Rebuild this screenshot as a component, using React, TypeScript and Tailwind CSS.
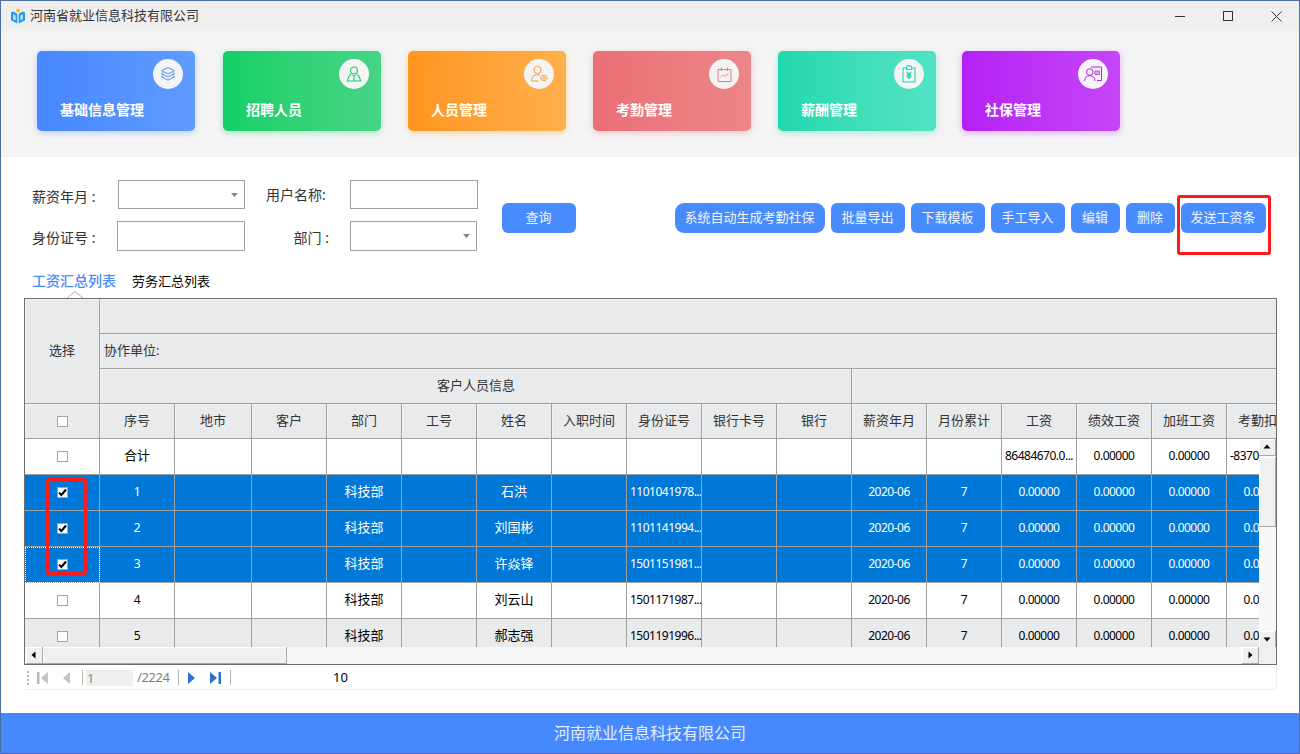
import type { ReactNode } from 'react';

const cards = [
  { title: '基础信息管理', bg: 'bg-gradient-to-r from-[#4787ff] to-[#5f9cff] shadow-[0_2px_6px_rgba(71,135,255,0.35)]', gap: '', icon: 'layers' },
  { title: '招聘人员', bg: 'bg-gradient-to-r from-[#10d066] to-[#46d386] shadow-[0_2px_6px_rgba(16,208,102,0.35)]', gap: 'ml-[28px]', icon: 'person' },
  { title: '人员管理', bg: 'bg-gradient-to-r from-[#ff951c] to-[#ffb04b] shadow-[0_2px_6px_rgba(255,149,28,0.35)]', gap: 'ml-[27px]', icon: 'manage' },
  { title: '考勤管理', bg: 'bg-gradient-to-r from-[#eb6f75] to-[#ec8689] shadow-[0_2px_6px_rgba(235,111,117,0.35)]', gap: 'ml-[27px]', icon: 'calendar' },
  { title: '薪酬管理', bg: 'bg-gradient-to-r from-[#1fd8ae] to-[#52e3c4] shadow-[0_2px_6px_rgba(31,216,174,0.35)]', gap: 'ml-[27px]', icon: 'pay' },
  { title: '社保管理', bg: 'bg-gradient-to-r from-[#b41ff5] to-[#c545f8] shadow-[0_2px_6px_rgba(180,31,245,0.35)]', gap: 'ml-[26px]', icon: 'card' },
];

const CardIcon = ({ name }: { name: string }) => {
  if (name === 'layers') {
    return (
      <svg width="16" height="16" viewBox="0 0 16 16" fill="none" stroke="#4f8cff" strokeWidth="1">
        <path d="M8 1.5 14.5 4.7 8 8 1.5 4.7Z" />
        <path d="M3.2 6.6 1.5 7.6 8 11 14.5 7.6 12.8 6.6" />
        <path d="M3.2 9.6 1.5 10.7 8 14.2 14.5 10.7 12.8 9.6" />
      </svg>
    );
  }
  if (name === 'person') {
    return (
      <svg width="16" height="16" viewBox="0 0 16 16" fill="none" stroke="#14cf69" strokeWidth="1.1">
        <circle cx="8" cy="4.4" r="3.4" />
        <path d="M5.4 8.2C3.2 9.2 2 11.6 1.6 14.6M10.6 8.2c2.2 1 3.4 3.4 3.8 6.4M.6 15h14.8M8 9.6v5M6.6 9.2l1.4 1 1.4-1" />
      </svg>
    );
  }
  if (name === 'manage') {
    return (
      <svg width="18" height="18" viewBox="0 0 18 18" fill="none" stroke="#fb9a2c" strokeWidth="1">
        <circle cx="7.5" cy="5" r="3.6" />
        <path d="M1.5 16c0-4 2.4-6.2 6-6.2 1 0 1.8.2 2.6.5M1.5 16h7" />
        <path d="M10.5 13 12.3 10.6h3.4L17.3 13l-1.6 2.4h-3.4Z" />
        <circle cx="14" cy="13" r="1" />
      </svg>
    );
  }
  if (name === 'calendar') {
    return (
      <svg width="15" height="15" viewBox="0 0 15 15" fill="none" stroke="#e9777c" strokeWidth="1">
        <path d="M1 2.5h13v12H1ZM4.5.5v3.5M10.5.5v3.5" />
        <path d="M3.5 10 5.8 7.8 7.6 9.4 11.5 6.4" strokeWidth="0.9" />
      </svg>
    );
  }
  if (name === 'pay') {
    return (
      <svg width="14" height="18" viewBox="0 0 14 18" fill="none" stroke="#22d8b0" strokeWidth="1.1">
        <path d="M4 3H1v14h12V3h-3" />
        <path d="M4.4 4.5V2.6C4.4 1.5 5.5.6 7 .6s2.6.9 2.6 2v1.9Z" />
        <path d="M4.8 6.8 7 9.4l2.2-2.6M4.6 10h4.8M4.6 12h4.8M7 9.4V14" strokeWidth="1.3" />
      </svg>
    );
  }
  return (
    <svg width="18" height="16" viewBox="0 0 18 16" fill="none" stroke="#b525f6" strokeWidth="1">
      <path d="M7 1h10.5v13.5H13" />
      <circle cx="5.8" cy="6" r="3.3" />
      <path d="M.6 15c0-3.4 2-5.4 5.2-5.4S11 11.6 11 15" />
      <path d="M11 5h4.5v3.5H11Z" fill="#b525f6" fillOpacity="0.4" strokeWidth="0.7" />
    </svg>
  );
};

const Logo = () => (
  <svg width="16" height="16" viewBox="0 0 16 16">
    <circle cx="8" cy="2.6" r="2.1" fill="#fdc52c" />
    <path d="M1 4.5 3.4 3.4 7.3 6v9.4L1 12.2Z" fill="#1d9bf0" />
    <path d="M15 4.5 12.6 3.4 8.7 6v9.4l6.3-3.2Z" fill="#1d9bf0" />
    <path d="M3.2 6 5.6 7.4v5.2L3.2 11.2ZM12.8 6 10.4 7.4v5.2l2.4-1.4Z" fill="#bfe6ff" />
  </svg>
);

const SmallArrow = () => (
  <svg width="7" height="4" viewBox="0 0 7 4" className="ml-auto mr-[6px]">
    <path d="M0 0h7L3.5 4Z" fill="#888888" />
  </svg>
);

const ActionButton = ({ width, round = 'rounded-[6px]', children }: { width: string; round?: string; children: ReactNode }) => (
  <button className={`${width} ${round} h-[30px] pb-[1px] pr-[1px] bg-[#488bff] text-[13px] text-[#f1f5ff] flex items-center justify-center`}>
    {children}
  </button>
);

const columns = [
  'w-[75px]', 'w-[77px]', 'w-[75px]', 'w-[75px]', 'w-[75px]', 'w-[75px]', 'w-[75px]', 'w-[75px]',
  'w-[75px]', 'w-[75px]', 'w-[75px]', 'w-[75px]', 'w-[75px]', 'w-[75px]', 'w-[75px]', 'w-[75px]',
];

const headers = ['序号', '地市', '客户', '部门', '工号', '姓名', '入职时间', '身份证号', '银行卡号', '银行', '薪资年月', '月份累计', '工资', '绩效工资', '加班工资', '考勤扣款'];

const emptyZero = ['0.00000', '0.00000', '0.00000', '0.00000'];

const rows = [
  { checked: true, selected: true, focus: false, shade: false, no: '1', name: '石洪', id: '1101041978...' },
  { checked: true, selected: true, focus: false, shade: false, no: '2', name: '刘国彬', id: '1101141994...' },
  { checked: true, selected: true, focus: true, shade: false, no: '3', name: '许焱锋', id: '1501151981...' },
  { checked: false, selected: false, focus: false, shade: false, no: '4', name: '刘云山', id: '1501171987...' },
  { checked: false, selected: false, focus: false, shade: true, no: '5', name: '郝志强', id: '1501191996...' },
];

const Checkbox = ({ checked = false }: { checked?: boolean }) => (
  <span className="w-[11px] h-[11px] border border-[#a5a5a5] bg-white flex items-center justify-center">
    {checked && (
      <svg width="9" height="9" viewBox="0 0 9 9">
        <path d="M1 4.6 3.4 7 8 1.5" fill="none" stroke="#000000" strokeWidth="2" />
      </svg>
    )}
  </span>
);

const Cell = ({ width, className = '', children }: { width: string; className?: string; children?: ReactNode }) => (
  <div className={`${width} shrink-0 h-full border-r border-b border-[#a0a0a0] flex items-center justify-center whitespace-nowrap overflow-hidden ${className}`}>
    {children}
  </div>
);

const ScrollButton = ({ d, className = '' }: { d: string; className?: string }) => (
  <div className={`bg-[#f0f0f0] border-r border-b border-[#a8a8a8] shadow-[inset_1px_1px_0_#ffffff] flex items-center justify-center shrink-0 ${className}`}>
    <svg width="8" height="8" viewBox="0 0 8 8">
      <path d={d} fill="#000000" />
    </svg>
  </div>
);

const DataRow = ({ row }: { row: (typeof rows)[number] }) => {
  const bg = row.selected ? 'bg-[#0078d7] text-white' : row.shade ? 'bg-[#e9eaec] text-black' : 'bg-white text-black';
  const values = ['', '', '科技部', '', row.name, '', row.id, '', '', '2020-06', '7', ...emptyZero];
  return (
    <div className={`flex h-[36px] text-[12px] tracking-[-0.5px] ${bg}`}>
      <Cell width="w-[75px]" className={row.focus ? 'outline-1 -outline-offset-1 outline-dotted outline-white' : ''}>
        <Checkbox checked={row.checked} />
      </Cell>
      <Cell width={columns[0]} className="pb-[1px]">{row.no}</Cell>
      {values.map((value, i) => (
        <Cell
          key={i}
          width={columns[i + 1]}
          className={
            value === row.id
              ? 'justify-start pl-[3px] pb-[1px]'
              : value === '科技部' || value === row.name
                ? 'text-[13px] tracking-normal pb-[1px]'
                : 'pb-[1px]'
          }
        >
          {value}
        </Cell>
      ))}
    </div>
  );
};

const SalaryTable = () => (
  <div className="relative ml-[23px] w-[1253px] h-[367px] border border-[#6e6e6e] overflow-hidden text-[13px] text-[#333333]">
    <div className="w-[1300px]">
      <div className="flex h-[105px] bg-[#e9eaec]">
        <div className="w-[75px] shrink-0 border-r border-b border-[#a0a0a0] flex items-center justify-center shadow-[inset_1px_1px_0_#f4f4f4]">
          选择
        </div>
        <div className="flex-1 flex flex-col">
          <div className="h-[35px] border-b border-[#a0a0a0] shadow-[inset_1px_1px_0_#f4f4f4]" />
          <div className="h-[35px] border-b border-[#a0a0a0] flex items-center pl-[4px] shadow-[inset_1px_1px_0_#f4f4f4]">协作单位:</div>
          <div className="h-[35px] flex">
            <div className="w-[752px] pl-[1px] border-r border-b border-[#a0a0a0] flex items-center justify-center shadow-[inset_1px_1px_0_#f4f4f4]">客户人员信息</div>
            <div className="flex-1 border-b border-[#a0a0a0] shadow-[inset_1px_1px_0_#f4f4f4]" />
          </div>
        </div>
      </div>

      <div className="flex h-[35px] bg-[#e9eaec]">
        <Cell width="w-[75px]" className="shadow-[inset_1px_1px_0_#f4f4f4]">
          <Checkbox />
        </Cell>
        {headers.map((text, i) => (
          <Cell key={text} width={columns[i]} className="shadow-[inset_1px_1px_0_#f4f4f4]">
            {text}
          </Cell>
        ))}
      </div>

      <div className="flex h-[36px] bg-white text-black text-[12px] tracking-[-0.5px]">
        <Cell width="w-[75px]">
          <Checkbox />
        </Cell>
        <Cell width={columns[0]} className="text-[13px] tracking-normal pb-[1px]">合计</Cell>
        {['', '', '', '', '', '', '', '', '', '', ''].map((_, i) => (
          <Cell key={i} width={columns[i + 1]} />
        ))}
        <Cell width={columns[12]} className="pb-[1px]">86484670.0...</Cell>
        <Cell width={columns[13]} className="pb-[1px]">0.00000</Cell>
        <Cell width={columns[14]} className="pb-[1px]">0.00000</Cell>
        <Cell width={columns[15]} className="justify-start pl-[3px] pb-[1px]">-83700.0...</Cell>
      </div>

      {rows.map((row) => (
        <DataRow key={row.no} row={row} />
      ))}
    </div>

    <div className="absolute left-[21px] top-[179px] w-[41px] h-[97px] border-[3px] border-[#ff1a1a] rounded-[3px]" />

    <div className="absolute right-0 top-[140px] bottom-[16px] w-[17px] bg-[#f8f8f8] flex flex-col">
      <ScrollButton d="M4 1.5 7.5 5.5H.5Z" className="h-[17px]" />
      <div className="h-[1px]" />
      <div className="h-[70px] bg-[#f0f0f0] border-r border-b border-[#a8a8a8] shadow-[inset_1px_1px_0_#ffffff]" />
      <div className="flex-1" />
      <ScrollButton d="M4 6.5 .5 2.5H7.5Z" className="h-[17px]" />
    </div>

    <div className="absolute left-0 right-0 bottom-0 h-[17px] bg-[#f8f8f8] flex">
      <ScrollButton d="M1.5 4 5.5 .5V7.5Z" className="w-[17px] ml-[1px]" />
      <div className="w-[244px] bg-[#f0f0f0] border-r border-b border-[#a8a8a8] shadow-[inset_1px_1px_0_#ffffff]" />
      <div className="flex-1" />
      <ScrollButton d="M6.5 4 2.5 .5V7.5Z" className="w-[17px]" />
      <div className="w-[17px] bg-[#f0f0f0]" />
    </div>
  </div>
);

const Pager = () => (
  <div className="ml-[23px] w-[1253px] h-[25px] pt-[1px] border-b border-r border-[#eeeeee] rounded-b-[3px] flex items-center text-[13px]">
    <span className="ml-[3px] w-[2px] h-[14px] border-l-2 border-dotted border-[#b5b5b5]" />
    <svg width="11" height="12" viewBox="0 0 11 12" className="ml-[8px]">
      <path d="M0 0h2.5v12H0Z" fill="#b5b5b5" />
      <path d="M11 0v12L4 6Z" fill="#c4c4c4" />
    </svg>
    <svg width="7" height="12" viewBox="0 0 7 12" className="ml-[15px]">
      <path d="M7 0v12L0 6Z" fill="#c4c4c4" />
    </svg>
    <span className="ml-[12px] w-[1px] h-[15px] bg-[#b5b5b5]" />
    <span className="ml-[3px] w-[47px] h-[16px] bg-[#efefef] text-[#8a8a8a] leading-[16px] pl-[1px]">1</span>
    <span className="ml-[4px] w-[36px] text-[#808080] tracking-[-0.4px]">/2224</span>
    <span className="ml-[5px] w-[1px] h-[15px] bg-[#b5b5b5]" />
    <svg width="7" height="12" viewBox="0 0 7 12" className="ml-[9px]">
      <path d="M0 0v12L7 6Z" fill="#2f6fd8" />
    </svg>
    <svg width="11" height="12" viewBox="0 0 11 12" className="ml-[15px]">
      <path d="M0 0v12L7 6Z" fill="#2f6fd8" />
      <path d="M8.5 0H11v12H8.5Z" fill="#2f6fd8" />
    </svg>
    <span className="ml-[9px] w-[1px] h-[15px] bg-[#b5b5b5]" />
    <span className="ml-[102px] text-black">10</span>
  </div>
);

export default function App() {
  return (
    <div className="w-[1300px] h-[754px] border border-[#4a6ea6] bg-white flex flex-col overflow-hidden font-['Noto_Sans','Noto_Sans_CJK_SC',sans-serif] text-[#333333]">
      <header className="h-[30px] shrink-0 bg-[#efefef] flex items-center pl-[9px] text-[13px]">
        <Logo />
        <span className="ml-[4px]">河南省就业信息科技有限公司</span>
        <div className="ml-auto flex items-center">
          <span className="w-[10px] h-[1px] bg-[#333333]" />
          <span className="ml-[38px] w-[10px] h-[10px] border border-[#333333]" />
          <svg width="11" height="11" viewBox="0 0 11 11" className="ml-[38px] mr-[17px]">
            <path d="M.5.5l10 10M10.5.5l-10 10" stroke="#333333" />
          </svg>
        </div>
      </header>

      <section className="h-[126px] shrink-0 bg-[#f4f4f4] flex pl-[36px] pt-[20px]">
        {cards.map((card) => (
          <div key={card.title} className={`relative w-[158px] h-[80px] rounded-[5px] ${card.bg} ${card.gap}`}>
            <div className="absolute right-[12px] top-[8px] w-[30px] h-[30px] rounded-full bg-[#f4f4f4] flex items-center justify-center">
              <CardIcon name={card.icon} />
            </div>
            <div className="pl-[23px] pt-[49px] text-[14px] leading-[20px] font-bold text-white">{card.title}</div>
          </div>
        ))}
      </section>

      <section className="flex pl-[31px] pt-[23px] text-[14px]">
        <div className="w-[446px]">
          <div className="flex items-center h-[29px]">
            <span className="w-[86px] pt-[3px]">薪资年月 :</span>
            <div className="w-[127px] h-[29px] border border-[#a0a0a0] flex items-center">
              <SmallArrow />
            </div>
            <span className="ml-[21px] w-[84px]">用户名称:</span>
            <div className="w-[128px] h-[29px] border border-[#a0a0a0]" />
          </div>
          <div className="flex items-center h-[30px] mt-[12px]">
            <span className="w-[85px] pt-[3px]">身份证号 :</span>
            <div className="w-[128px] h-[30px] border border-[#a0a0a0]" />
            <span className="w-[105px] pr-[21px] pt-[3px] text-right">部门 :</span>
            <div className="w-[127px] h-[30px] border border-[#a0a0a0] flex items-center">
              <SmallArrow />
            </div>
          </div>
        </div>
        <div className="ml-[24px] mt-[23px]">
          <ActionButton width="w-[74px]">查询</ActionButton>
        </div>
        <div className="ml-[99px] mt-[23px] flex gap-[6px]">
          <ActionButton width="w-[150px]" round="rounded-[9px]">系统自动生成考勤社保</ActionButton>
          <ActionButton width="w-[74px]">批量导出</ActionButton>
          <ActionButton width="w-[74px]">下载模板</ActionButton>
          <ActionButton width="w-[74px]">手工导入</ActionButton>
          <ActionButton width="w-[49px]">编辑</ActionButton>
          <ActionButton width="w-[49px]">删除</ActionButton>
          <div className="relative">
            <ActionButton width="w-[85px]">发送工资条</ActionButton>
            <div className="absolute left-[-4px] top-[-8px] w-[94px] h-[60px] border-[3px] border-[#ff1a1a] rounded-[3px]" />
          </div>
        </div>
      </section>

      <nav className="relative h-[27px] mt-[20px] flex items-start pl-[31px] leading-[20px]">
        <span className="text-[14px] font-medium text-[#488bff]">工资汇总列表</span>
        <span className="ml-[16px] text-[13px] text-black">劳务汇总列表</span>
        <svg width="16" height="7" viewBox="0 0 16 7" className="absolute left-[66px] bottom-0">
          <path d="M0 7 8 .5 16 7" fill="#ffffff" stroke="#b0b0b0" />
        </svg>
      </nav>

      <SalaryTable />
      <Pager />

      <footer className="mt-auto h-[40px] shrink-0 bg-[#4689ff] flex items-center justify-center text-[16px] text-[#e4edff]">
        河南就业信息科技有限公司
      </footer>
    </div>
  );
}
